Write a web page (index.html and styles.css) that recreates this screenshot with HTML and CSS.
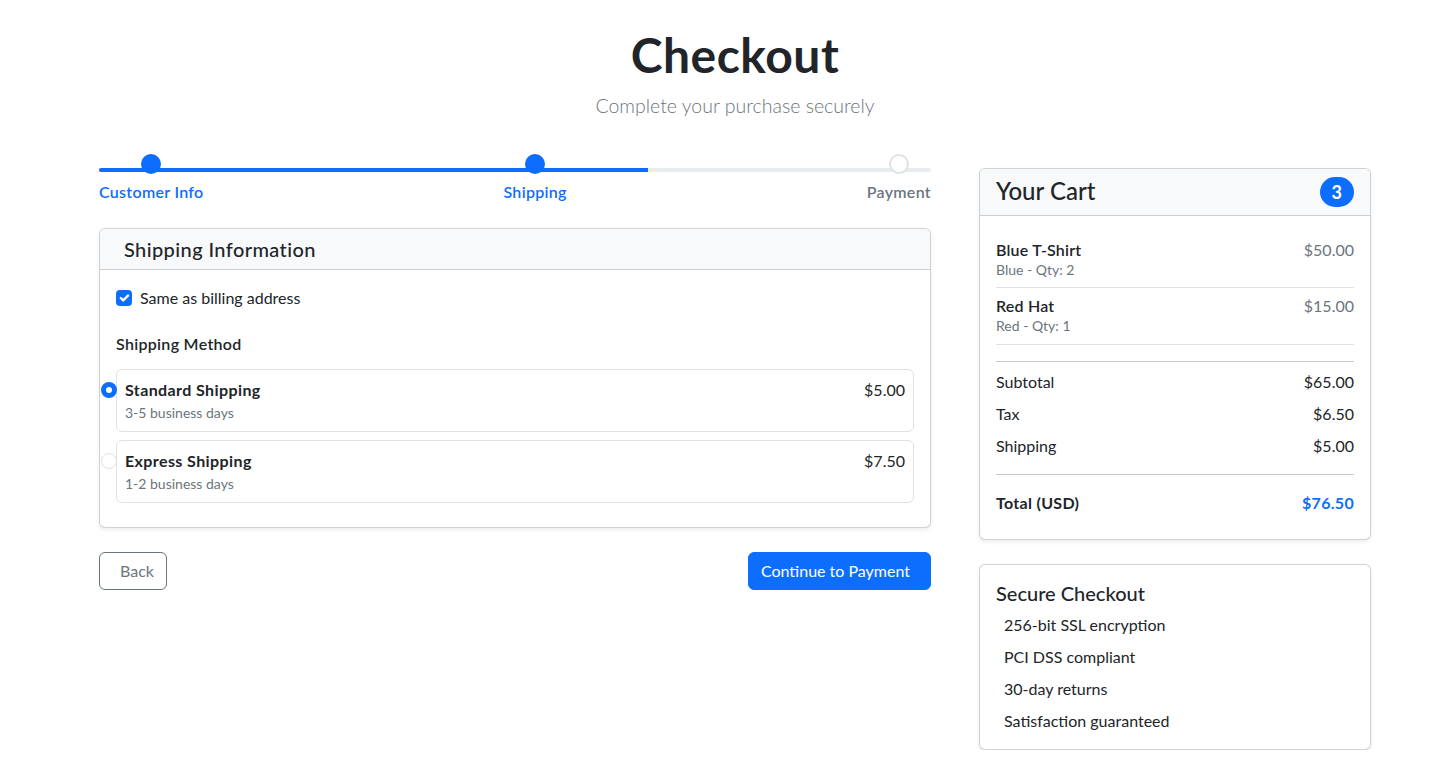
FILE: index.html
```html
<!DOCTYPE html>
<html lang="en">
<head>
<meta charset="utf-8">
<title>Checkout</title>
<link rel="stylesheet" href="styles.css">
</head>
<body>
<div class="container">
  <header class="page-header">
    <h1 class="title">Checkout</h1>
    <p class="lead">Complete your purchase securely</p>
  </header>

  <div class="layout">
    <main class="main-col">
      <div class="progress-track">
        <div class="progress-fill" style="width: 66%"></div>
      </div>
      <div class="steps">
        <div class="step done">
          <span class="dot"></span>
          <span class="step-label">Customer Info</span>
        </div>
        <div class="step done">
          <span class="dot"></span>
          <span class="step-label">Shipping</span>
        </div>
        <div class="step">
          <span class="dot"></span>
          <span class="step-label">Payment</span>
        </div>
      </div>

      <section class="card">
        <div class="card-header wide">
          <h5 class="card-title">Shipping Information</h5>
        </div>
        <div class="card-body">
          <label class="check-row">
            <span class="checkbox">
              <svg viewBox="0 0 20 20" width="16" height="16"><path d="M6 10l3 3 6-6" fill="none" stroke="#fff" stroke-width="3" stroke-linecap="round" stroke-linejoin="round"/></svg>
            </span>
            <span>Same as billing address</span>
          </label>

          <div class="method-label">Shipping Method</div>

          <div class="option">
            <span class="radio checked"></span>
            <div class="option-text">
              <div class="option-name">Standard Shipping</div>
              <div class="option-sub">3-5 business days</div>
            </div>
            <span class="option-price">$5.00</span>
          </div>
          <div class="option">
            <span class="radio"></span>
            <div class="option-text">
              <div class="option-name">Express Shipping</div>
              <div class="option-sub">1-2 business days</div>
            </div>
            <span class="option-price">$7.50</span>
          </div>
        </div>
      </section>

      <div class="actions">
        <button class="btn btn-outline">Back</button>
        <button class="btn btn-primary">Continue to Payment</button>
      </div>
    </main>

    <aside class="side-col">
      <section class="card">
        <div class="card-header cart-header">
          <h4 class="cart-title">Your Cart</h4>
          <span class="badge">3</span>
        </div>
        <div class="card-body">
          <ul class="items">
            <li class="item">
              <div>
                <div class="item-name">Blue T-Shirt</div>
                <div class="item-sub">Blue - Qty: 2</div>
              </div>
              <span class="item-price">$50.00</span>
            </li>
            <li class="item">
              <div>
                <div class="item-name">Red Hat</div>
                <div class="item-sub">Red - Qty: 1</div>
              </div>
              <span class="item-price">$15.00</span>
            </li>
          </ul>
          <hr class="sep sep-top">
          <div class="summary">
            <div class="row"><span>Subtotal</span><span>$65.00</span></div>
            <div class="row"><span>Tax</span><span>$6.50</span></div>
            <div class="row"><span>Shipping</span><span>$5.00</span></div>
          </div>
          <hr class="sep sep-bottom">
          <div class="row total"><span>Total (USD)</span><span class="total-amount">$76.50</span></div>
        </div>
      </section>

      <section class="card secure">
        <div class="card-body">
          <h5 class="card-title secure-title">Secure Checkout</h5>
          <ul class="secure-list">
            <li>256-bit SSL encryption</li>
            <li>PCI DSS compliant</li>
            <li>30-day returns</li>
            <li>Satisfaction guaranteed</li>
          </ul>
        </div>
      </section>
    </aside>
  </div>
</div>
</body>
</html>
```

FILE: styles.css
```css
* { box-sizing: border-box; }

body {
  margin: 0;
  font-family: "Lato", "Noto Sans", "Liberation Sans", sans-serif;
  font-size: 16px;
  line-height: 1.5;
  color: #212529;
  background: #fff;
}

.container {
  width: 1272px;
  margin-left: 99px;
}

.page-header {
  text-align: center;
  padding-top: 26px;
  margin-bottom: 47px;
}

.title {
  margin: 0 0 7px;
  font-size: 48px;
  font-weight: 700;
  line-height: 1.2;
  letter-spacing: 0.5px;
}

.lead {
  margin: 0;
  font-size: 19.5px;
  font-weight: 300;
  line-height: 30px;
  color: #6c757d;
}

.layout {
  display: grid;
  grid-template-columns: 832px 392px;
  column-gap: 48px;
  align-items: start;
}

/* progress */
.progress-track {
  height: 4px;
  border-radius: 2px;
  background: #e9ecef;
  overflow: hidden;
}

.progress-fill {
  height: 100%;
  background: #0d6efd;
}

.steps {
  display: flex;
  justify-content: space-between;
  margin-top: -18px;
  margin-bottom: 25px;
}

.step {
  display: flex;
  flex-direction: column;
  align-items: center;
}

.dot {
  width: 20px;
  height: 20px;
  border-radius: 50%;
  background: #fff;
  border: 2px solid #dee2e6;
}

.step.done .dot {
  background: #0d6efd;
  border-color: #0d6efd;
}

.step-label {
  margin-top: 7px;
  font-size: 16px;
  font-weight: 600;
  line-height: 22px;
  letter-spacing: 0.3px;
  color: #6c757d;
}

.step.done .step-label { color: #0d6efd; }

/* cards */
.card {
  background: #fff;
  border: 1px solid rgba(0, 0, 0, 0.175);
  border-radius: 6px;
  box-shadow: 0 2px 4px rgba(0, 0, 0, 0.075);
  overflow: hidden;
}

.card-header {
  background: #f8f9fa;
  border-bottom: 1px solid rgba(0, 0, 0, 0.175);
  padding: 8px 16px;
}

.card-header.wide { padding: 8px 24px; }

.card-title {
  margin: 0;
  font-size: 20px;
  font-weight: 500;
  line-height: 1.2;
}

.wide .card-title { letter-spacing: 0.4px; }

.card-body { padding: 16px; }

.check-row {
  display: flex;
  align-items: center;
  gap: 8px;
  margin-bottom: 22px;
}

.checkbox {
  width: 16px;
  height: 16px;
  border-radius: 4px;
  background: #0d6efd;
  display: flex;
}

.method-label {
  font-weight: 600;
  letter-spacing: 0.3px;
  margin-bottom: 13px;
}

.option {
  display: flex;
  align-items: flex-start;
  border: 1px solid #dee2e6;
  border-radius: 6px;
  padding: 8px;
  margin-bottom: 8px;
}

.radio {
  flex: none;
  width: 16px;
  height: 16px;
  margin: 4px 8px 0 -24px;
  border-radius: 50%;
  border: 1px solid #dee2e6;
  background: #fff;
}

.radio.checked {
  border: 5px solid #0d6efd;
}

.option-text { flex: 1; }

.option-name {
  font-weight: 700;
  letter-spacing: 0.4px;
}

.option-sub {
  font-size: 14px;
  color: #6c757d;
}

.actions {
  display: flex;
  justify-content: space-between;
  margin-top: 24px;
}

.btn {
  font: inherit;
  font-size: 16px;
  line-height: 24px;
  padding: 6px 12px;
  border-radius: 6px;
  border: 1px solid transparent;
  cursor: pointer;
}

.btn-outline {
  background: #fff;
  border-color: #6c757d;
  color: #6c757d;
  padding-left: 20px;
}

.btn-primary {
  background: #0d6efd;
  border-color: #0d6efd;
  color: #fff;
  padding-right: 20px;
}

/* cart */
.cart-header {
  display: flex;
  align-items: center;
  justify-content: space-between;
}

.cart-title {
  margin: 0;
  font-size: 24px;
  font-weight: 500;
  line-height: 1.2;
}

.badge {
  display: inline-block;
  min-width: 34px;
  padding: 6px 12px;
  border-radius: 50rem;
  background: #0d6efd;
  color: #fff;
  font-size: 18px;
  font-weight: 700;
  line-height: 1;
  text-align: center;
}

.items {
  list-style: none;
  margin: 0;
  padding: 0;
}

.item {
  display: flex;
  justify-content: space-between;
  align-items: flex-start;
  padding: 8px 0;
  border-bottom: 1px solid #dee2e6;
}

.item-name {
  font-weight: 600;
  line-height: 20px;
  letter-spacing: 0.2px;
}

.item-sub {
  font-size: 14px;
  line-height: 19.5px;
  color: #6c757d;
}

.item-price {
  color: #6c757d;
  line-height: 20px;
}

.sep {
  border: 0;
  border-top: 1px solid #c8c9ca;
  height: 0;
}

.sep-top { margin: 16px 0 8px; }
.sep-bottom { margin: 16px 0; }

.summary {
  display: flex;
  flex-direction: column;
  gap: 8px;
}

.row {
  display: flex;
  justify-content: space-between;
}

.total {
  font-weight: 700;
  letter-spacing: 0.3px;
  margin-bottom: 8px;
}

.total-amount { color: #0d6efd; }

.secure { margin-top: 24px; }

.secure-title { margin-bottom: 8px; }

.secure-list {
  list-style: none;
  margin: 0;
  padding: 0;
}

.secure-list li {
  padding-left: 8px;
  margin-bottom: 8px;
}

.secure-list li:last-child { margin-bottom: 0; }
```
